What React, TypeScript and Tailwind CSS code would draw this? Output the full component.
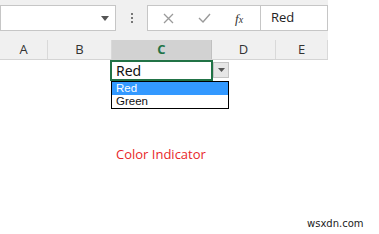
export default function App() {
  const cols = [
    { label: "A", w: "w-[48px]" },
    { label: "B", w: "w-[64px]" },
    { label: "C", w: "w-[100px]" },
    { label: "D", w: "w-[64px]" },
    { label: "E", w: "w-[52px]" },
  ];
  return (
    <div className="w-[379px] h-[234px] bg-white overflow-hidden relative" style={{ fontFamily: '"Open Sans", "Liberation Sans", sans-serif' }}>
      {/* formula bar + column headers */}
      <div className="w-[328px] bg-[#f0f0f0]">
        <div className="h-[40px] flex items-start pt-[5px]">
          <div className="w-[116px] h-[26px] bg-white border border-[#c6c6c6] flex items-center justify-end pr-[6px]">
            <svg width="8" height="5" viewBox="0 0 8 5"><path d="M0 0h8L4 5z" fill="#555" /></svg>
          </div>
          <div className="w-[31px] h-[26px] flex flex-col items-center justify-center gap-[2px]">
            <div className="w-[2px] h-[2px] bg-[#777]" />
            <div className="w-[2px] h-[2px] bg-[#777]" />
            <div className="w-[2px] h-[2px] bg-[#777]" />
          </div>
          <div className="w-[114px] h-[26px] bg-white border border-[#c6c6c6] flex items-center">
            <svg className="ml-[15px]" width="11" height="11" viewBox="0 0 11 11"><path d="M1 1l9 9M10 1l-9 9" stroke="#9a9a9a" strokeWidth="1.3" /></svg>
            <svg className="ml-[24px]" width="13" height="10" viewBox="0 0 13 10"><path d="M1 5l4 4 7-8" stroke="#9a9a9a" strokeWidth="1.4" fill="none" /></svg>
            <span className="ml-[24px] text-[13px] italic text-[#333] leading-none" style={{ fontFamily: '"Liberation Serif", serif' }}>f<span className="text-[10px]">x</span></span>
          </div>
          <div className="flex-1 h-[26px] bg-white border border-l-0 border-[#c6c6c6] flex items-center pl-[10px] text-[13px] text-[#222]">
            Red
          </div>
        </div>
        <div className="h-[20px] flex border-b border-[#d4d4d4]">
          {cols.map((c) => (
            <div
              key={c.label}
              className={`${c.w} h-full flex items-center justify-center text-[13px] border-r ${
                c.label === "C" ? "bg-[#d2d2d2] text-[#217346] font-bold border-[#c0c0c0]" : "text-[#333] border-[#d9d9d9]"
              }`}
            >
              {c.label}
            </div>
          ))}
        </div>
      </div>

      {/* active cell with data validation list */}
      <div className="flex pl-[110px]">
        <div className="w-[103px] h-[21px] border-2 border-[#217346] flex items-center pl-[4px] text-[14px] text-[#111]" style={{ fontFamily: '"Noto Sans", sans-serif' }}>
          Red
        </div>
        <div className="mt-[2px] w-[16px] h-[16px] bg-[#e6e6e6] border border-[#c4c4c4] flex items-center justify-center">
          <svg width="7" height="4" viewBox="0 0 7 4"><path d="M0 0h7L3.5 4z" fill="#555" /></svg>
        </div>
      </div>
      <div className="ml-[111px] w-[118px] border border-black text-[11.5px] leading-[13px] text-[#111]" style={{ fontFamily: '"Liberation Sans", sans-serif' }}>
        <div className="bg-[#3399ff] text-white pl-[4px] h-[13px]">Red</div>
        <div className="pl-[4px] h-[13px]">Green</div>
      </div>

      <div className="mt-[36px] ml-[116px] text-[13px] leading-[18px] text-[#e8262a]">Color Indicator</div>

      <div className="absolute left-[307px] top-[216px] text-[10px] text-[#222]" style={{ fontFamily: '"DejaVu Sans", sans-serif' }}>
        wsxdn.com
      </div>
    </div>
  );
}
